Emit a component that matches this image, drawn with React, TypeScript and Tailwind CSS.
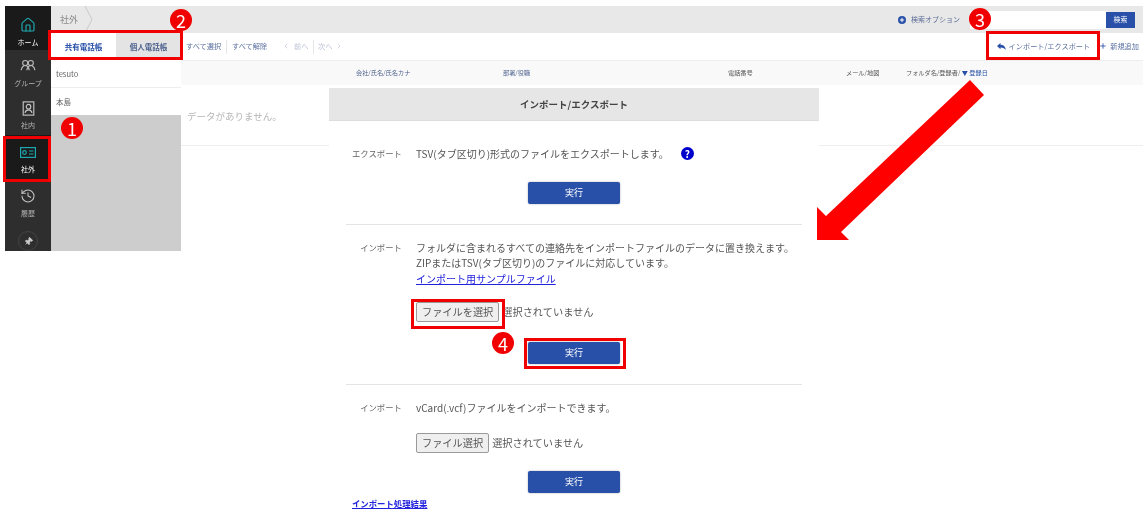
import { ChevronLeft, ChevronRight, History, House, Pin, Plus } from "lucide-react";
import type { ReactNode } from "react";

const font = "font-['Noto_Sans_CJK_JP','Noto_Sans',sans-serif]";

function GroupIcon() {
  return (
    <svg width="16" height="13" viewBox="0 0 20 16" fill="none" stroke="#bbb" strokeWidth="1.400" aria-hidden="true">
      <circle cx="6.500" cy="5" r="3.200" />
      <circle cx="13.500" cy="5" r="3.200" />
      <path d="M1.500 14c.4-3 2-5 3.600-5.600M8 8.400c1.600.6 3.200 2.600 3.600 5.600M8.500 14c.4-3 2-5 3.600-5.600M15 8.400c1.600.6 3.200 2.600 3.600 5.600" />
    </svg>
  );
}

function BookIcon() {
  return (
    <svg width="13" height="15" viewBox="0 0 14 17" fill="none" stroke="#c4c4c4" strokeWidth="1.300" aria-hidden="true">
      <rect x="1" y="1" width="12" height="15" />
      <circle cx="7" cy="6.500" r="2.600" />
      <path d="M3 13.500c.5-2.600 2-3.500 4-3.500s3.500.9 4 3.500" />
    </svg>
  );
}

function CardIcon() {
  return (
    <svg width="16" height="11" viewBox="0 0 16 11" fill="none" stroke="#1ea7ae" strokeWidth="1.200" aria-hidden="true">
      <rect x="0.600" y="0.600" width="14.800" height="9.800" />
      <circle cx="4.500" cy="5.500" r="1.800" />
      <path d="M9 4h4.500M9 7h4.500" />
    </svg>
  );
}

function ReplyIcon() {
  return (
    <svg width="9" height="7" viewBox="0 0 9 7" fill="#2850a8" aria-hidden="true">
      <path d="M0 3L3.500 0v1.800C6.500 1.800 8.300 3.500 9 7 7.800 5.200 6 4.400 3.500 4.400V6.200z" />
    </svg>
  );
}

function NavItem({ icon, label, active, h }: { icon: ReactNode; label: string; active?: boolean; h: string }) {
  return (
    <div className={`flex flex-col items-center justify-center gap-[3px] pt-[1px] ${h} ${active ? "bg-[#1a1a1a] text-white" : "text-[#b5b5b5]"}`}>
      <div className="flex h-[20px] items-center justify-center">{icon}</div>
      <span className="text-[7px] leading-[9px]">{label}</span>
    </div>
  );
}

function Sidebar() {
  return (
    <div className="flex h-[245px] w-[46px] shrink-0 flex-col overflow-hidden bg-[#2e2e2e]">
      <div className="bg-[#1a1a1a] pt-[5px]">
        <NavItem h="h-[39px]" active label="ホーム" icon={<House size={16} color="#1ea7ae" strokeWidth={1.800} />} />
      </div>
      <NavItem h="h-[43px]" label="グループ" icon={<GroupIcon />} />
      <NavItem h="h-[43px]" label="社内" icon={<BookIcon />} />
      <NavItem h="h-[46px]" active label="社外" icon={<CardIcon />} />
      <NavItem h="h-[43px]" label="履歴" icon={<History size={16} color="#c4c4c4" strokeWidth={1.600} />} />
      <div className="flex justify-center pt-[8px]">
        <div className="flex h-[20px] w-[20px] shrink-0 items-center justify-center rounded-full border border-[#444]">
          <Pin size={9} color="#ccc" fill="#ccc" className="rotate-45" />
        </div>
      </div>
    </div>
  );
}

function TopBar() {
  return (
    <div className="flex h-[27px] items-center bg-[#e8e8e8] pl-[9px] pr-[8px]">
      <span className="text-[9px] text-[#8a8a8a]">社外</span>
      <svg width="9" height="27" viewBox="0 0 9 27" fill="none" stroke="#c9c9c9" className="ml-[6px]" aria-hidden="true">
        <path d="M1 0l7 13.500L1 27" />
      </svg>
      <div className="ml-auto flex items-center">
        <span className="flex h-[8px] w-[8px] items-center justify-center rounded-full bg-[#2850a8]">
          <Plus size={6} color="#fff" strokeWidth={4} />
        </span>
        <span className="ml-[5px] w-[59px] text-[7px] text-[#5a6b94]">検索オプション</span>
        <div className="h-[18px] w-[136px] bg-white" />
        <div className="flex h-[16px] w-[29px] items-center justify-center bg-[#2850a8] text-[7px] text-white">検索</div>
      </div>
    </div>
  );
}

function TabsPanel() {
  return (
    <div className="flex h-[218px] w-[130px] shrink-0 flex-col bg-[#cdcdcd]">
      <div className="flex h-[27px] bg-white text-[7.500px] font-bold">
        <div className="flex w-[65px] items-center justify-center text-[#2850a8]">共有電話帳</div>
        <div className="flex w-[65px] items-center justify-center bg-[#e4e4e4] text-[#4d628f]">個人電話帳</div>
      </div>
      <div className="flex h-[28px] items-center border-b border-[#eee] bg-white pl-[5px] text-[7.500px] text-[#666]">tesuto</div>
      <div className="flex h-[27px] items-center bg-white pl-[5px] text-[7.500px] text-[#666]">本島</div>
    </div>
  );
}

function Toolbar() {
  return (
    <div className="flex h-[27px] items-center pl-[5px] pr-[4px] text-[7.200px] text-[#5a70a0]">
      <span className="w-[40px]">すべて選択</span>
      <span className="h-[14px] w-px bg-[#e6e6e6]" />
      <span className="ml-[5px] w-[40px]">すべて解除</span>
      <span className="ml-[10px] flex w-[31px] items-center gap-[4px] text-[#b9c2d4]">
        <ChevronLeft size={8} strokeWidth={2} />
        前へ
      </span>
      <span className="h-[14px] w-px bg-[#e6e6e6]" />
      <span className="ml-[4px] flex items-center gap-[3px] text-[#b9c2d4]">
        次へ
        <ChevronRight size={8} strokeWidth={2} />
      </span>
      <span className="ml-auto flex items-center gap-[3px]">
        <ReplyIcon />
        インポート/エクスポート
      </span>
      <span className="ml-[9px] flex items-center gap-[3px]">
        <Plus size={8} color="#2850a8" strokeWidth={2.500} />
        新規追加
      </span>
    </div>
  );
}

function TableHead() {
  return (
    <div className="grid h-[25px] grid-cols-[147px_225px_118px_60px_1fr] items-center border-t border-[#eee] bg-[#f9f9f9] pl-[175px] text-[6.200px] text-[#555]">
      <span className="text-[#4d628f]">会社/氏名/氏名カナ</span>
      <span className="text-[#4d628f]">部署/役職</span>
      <span>電話番号</span>
      <span>メール/地図</span>
      <span className="whitespace-nowrap">
        フォルダ名/登録者/ <span className="text-[#2850a8]">▼ 登録日</span>
      </span>
    </div>
  );
}

function RunButton() {
  return (
    <button
      type="button"
      className="mx-auto flex h-[22px] w-[92px] items-center justify-center rounded-[2px] bg-[#2850a8] text-[9px] text-white shadow-[0_0_2px_rgba(0,0,0,0.35)]"
    >
      実行
    </button>
  );
}

function FileRow({ label, className }: { label: string; className: string }) {
  return (
    <div className={`flex items-center ${className}`}>
      <button
        type="button"
        className="flex h-[20px] items-center justify-center rounded-[2px] border border-[#9a9a9a] bg-[#efefef] px-[5px] text-[10.200px] text-[#555]"
      >
        {label}
      </button>
      <span className="ml-[3px] text-[10.200px] text-[#555]">選択されていません</span>
    </div>
  );
}

function Row({ label, children }: { label: string; children: ReactNode }) {
  return (
    <div className="grid grid-cols-[73px_1fr] gap-x-[14px]">
      <span className="text-right text-[8.400px] leading-[14px] text-[#666]">{label}</span>
      <div className="text-[10px] leading-[15.500px] text-[#555]">{children}</div>
    </div>
  );
}

function ImportDialog() {
  return (
    <div className="absolute left-[329px] top-[88px] h-[427px] w-[490px] overflow-hidden bg-white">
      <div className="flex h-[33px] items-center justify-center border-b border-[#ddd] bg-[#e6e6e6] text-[9.500px] font-bold text-[#444]">
        インポート/エクスポート
      </div>
      <div className="pt-[25px]">
        <Row label="エクスポート">
          <div className="flex items-center">
            TSV(タブ区切り)形式のファイルをエクスポートします。
            <span className="ml-[12px] flex h-[13px] w-[13px] items-center justify-center rounded-full bg-[#0000cc] text-[10px] font-bold text-white">?</span>
          </div>
        </Row>
        <div className="pt-[20px]">
          <RunButton />
        </div>
      </div>
      <div className="mx-[17px] mt-[20px] border-t border-[#e4e4e4]" />
      <div className="pt-[15px]">
        <Row label="インポート">
          <p>フォルダに含まれるすべての連絡先をインポートファイルのデータに置き換えます。</p>
          <p>ZIPまたはTSV(タブ区切り)のファイルに対応しています。</p>
          <a href="#" className="text-[#2222dd] underline">インポート用サンプルファイル</a>
          <FileRow label="ファイルを選択" className="mt-[16px]" />
        </Row>
        <div className="pt-[20px]">
          <RunButton />
        </div>
      </div>
      <div className="mx-[17px] mt-[20px] border-t border-[#e4e4e4]" />
      <div className="pt-[15px]">
        <Row label="インポート">
          <p>vCard(.vcf)ファイルをインポートできます。</p>
          <FileRow label="ファイル選択" className="mt-[17px]" />
        </Row>
        <div className="pt-[18px]">
          <RunButton />
        </div>
      </div>
      <a href="#" className="ml-[23px] mt-[4px] block text-[8.400px] font-bold leading-[12px] text-[#2222dd] underline">インポート処理結果</a>
    </div>
  );
}

function Badge({ n, className }: { n: number; className: string }) {
  return (
    <div className={`absolute flex h-[22px] w-[22px] items-center justify-center rounded-full bg-[#f00000] text-[18px] leading-none text-white ${className}`}>
      {n}
    </div>
  );
}

function Annotations() {
  return (
    <>
      <div className="absolute left-[3px] top-[136px] h-[46px] w-[48px] border-[3px] border-[#f00000]" />
      <div className="absolute left-[48px] top-[30px] h-[30px] w-[135px] border-[3px] border-[#f00000]" />
      <div className="absolute left-[986px] top-[31px] h-[29px] w-[114px] border-[3px] border-[#f00000]" />
      <div className="absolute left-[411px] top-[299px] h-[30px] w-[94px] border-[3px] border-[#f00000]" />
      <div className="absolute left-[524px] top-[338px] h-[31px] w-[102px] border-[3px] border-[#f00000]" />
      <Badge n={1} className="left-[61px] top-[117px]" />
      <Badge n={2} className="left-[170px] top-[9px]" />
      <Badge n={3} className="left-[969px] top-[8px]" />
      <Badge n={4} className="left-[492px] top-[332px]" />
      <svg width="1147" height="515" className="pointer-events-none absolute left-0 top-0" aria-hidden="true">
        <polygon points="970,80 984,95 841,232 849,240 817,240 817,207 826,216" fill="#ff0000" />
      </svg>
    </>
  );
}

export default function App() {
  return (
    <div className={`relative h-[515px] w-[1147px] overflow-hidden bg-white blur-[0.3px] ${font}`}>
      <div className="flex pl-[5px] pr-[4px] pt-[6px]">
        <Sidebar />
        <div className="min-w-0 flex-1">
          <TopBar />
          <div className="flex">
            <TabsPanel />
            <div className="min-w-0 flex-1">
              <Toolbar />
              <TableHead />
              <div className="flex h-[61px] items-center border-b border-[#eee] pl-[6px] pt-[2px] text-[9.500px] text-[#b5b5b5]">
                データがありません。
              </div>
            </div>
          </div>
        </div>
      </div>
      <ImportDialog />
      <Annotations />
    </div>
  );
}
